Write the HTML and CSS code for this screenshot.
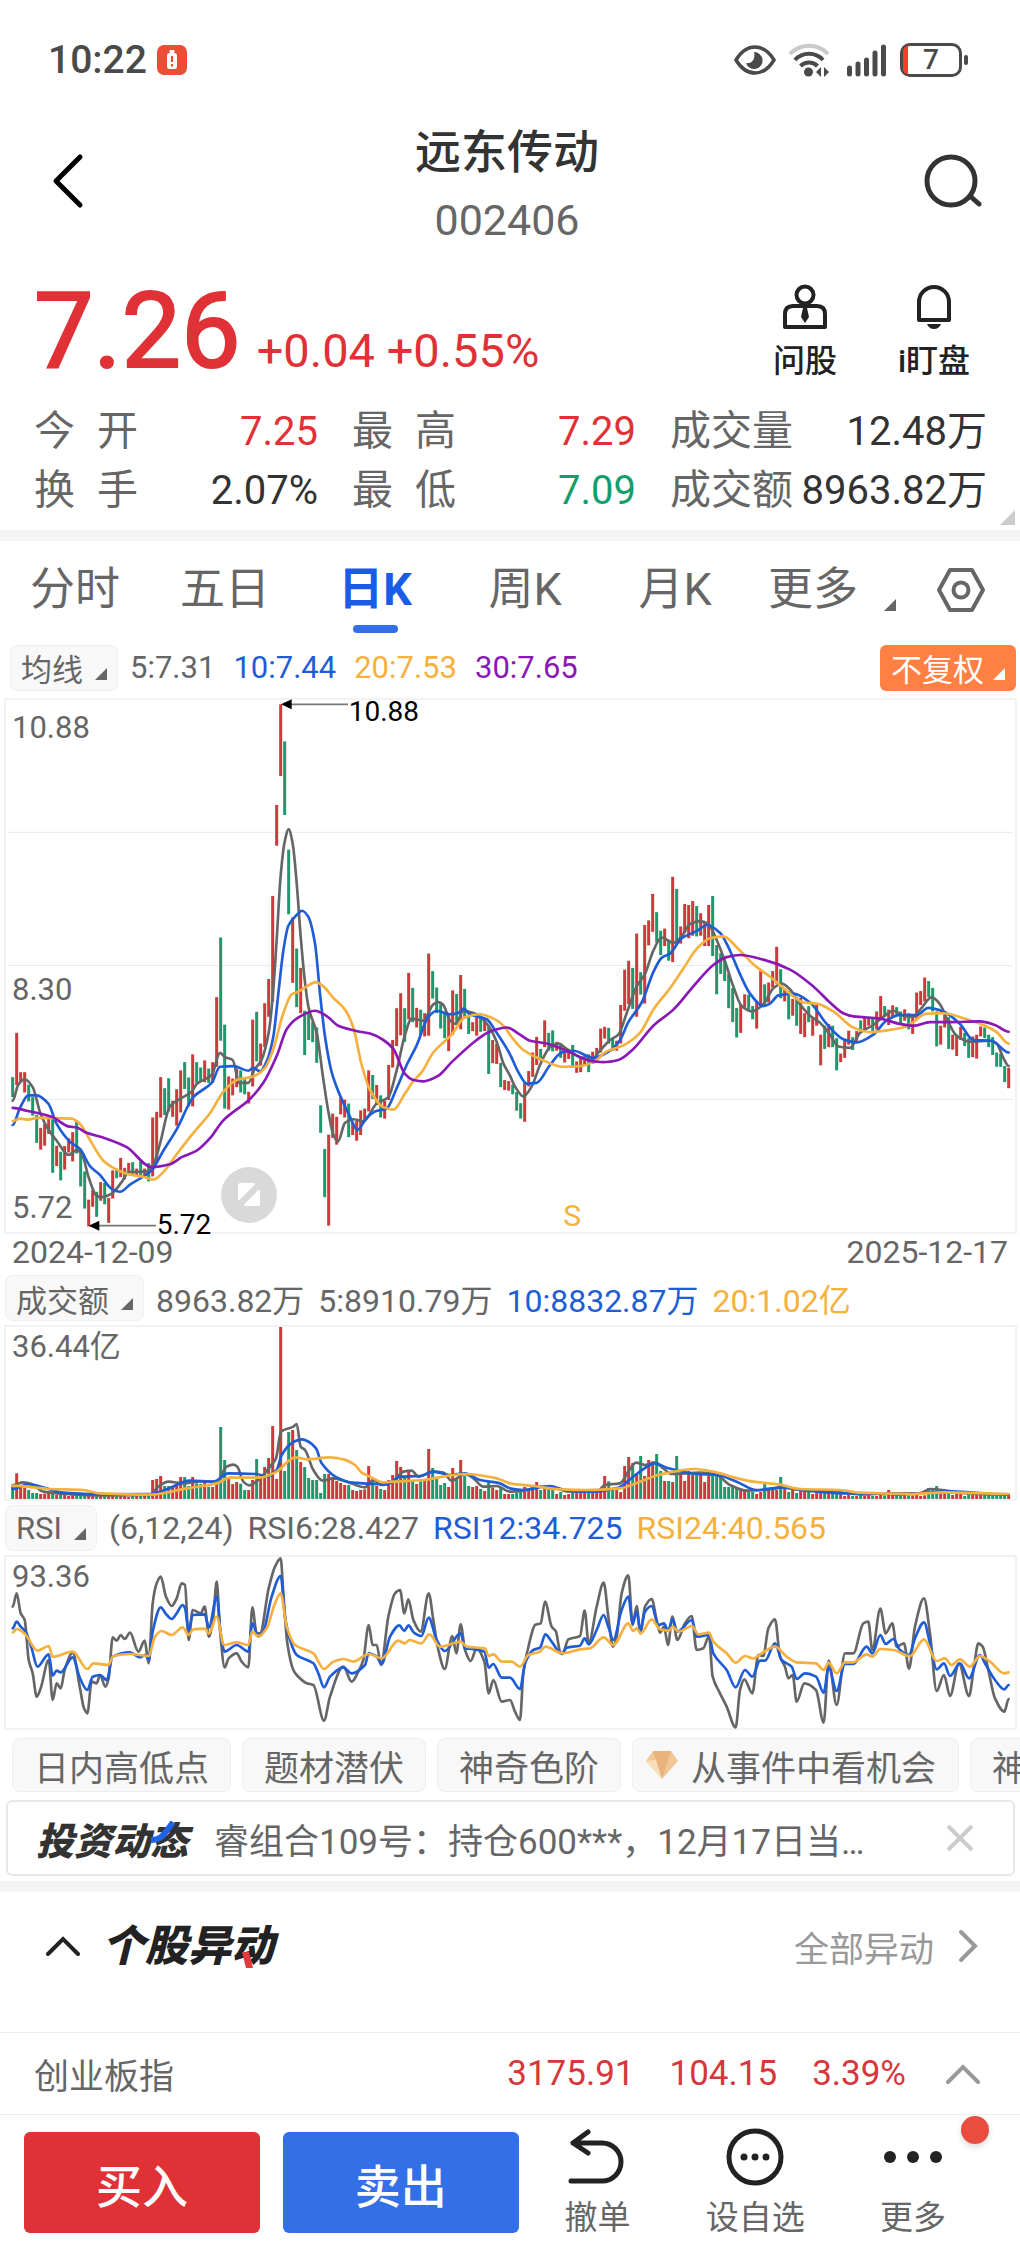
FILE: index.html
```html
<!DOCTYPE html>
<html lang="zh-CN">
<head>
<meta charset="utf-8">
<meta name="viewport" content="width=device-width, initial-scale=1">
<title>远东传动 002406</title>
<link rel="stylesheet" href="styles.css">
</head>
<body>
<div class="status">
  <span class="clock">10:22</span>
  <svg class="alert" viewBox="0 0 30 30" aria-hidden="true"><rect width="30" height="30" rx="7" fill="#eb4d36"/><rect x="10" y="8" width="10" height="16" rx="2.5" fill="#fff"/><rect x="12.500" y="5" width="5" height="3" rx="1" fill="#fff"/><path d="M15 11v6M15 19v2.500" stroke="#eb4d36" stroke-width="2.200"/></svg>
  <span class="fill"></span>
  <svg class="eye" viewBox="0 0 42 30" aria-hidden="true"><path d="M2 15C8 5 14 2 21 2s13 3 19 13c-6 10-12 13-19 13S8 25 2 15z" fill="none" stroke="#4a4a4a" stroke-width="3.500"/><path d="M20 7a8.500 8.500 0 1 1-8 11c5 1 10-3 8-11z" fill="#4a4a4a"/></svg>
  <svg class="wifi" viewBox="0 0 42 34" aria-hidden="true"><g fill="none" stroke="#4a4a4a" stroke-width="4"><path d="M2 11a26 26 0 0 1 38 0" stroke="#c9c9c9"/><path d="M7 17a19 19 0 0 1 28 0"/><path d="M12.500 23a12 12 0 0 1 17 0"/></g><circle cx="20.500" cy="29" r="4.500" fill="#4a4a4a"/><path d="M33 24v10l-5-5zM36 24v10l5-5z" fill="#4a4a4a"/></svg>
  <svg class="signal" viewBox="0 0 42 34" aria-hidden="true"><path d="M3.500 25v6M12 21v10M20.500 17v14M29 10v21M37.500 4v27" stroke="#4a4a4a" stroke-width="5" stroke-linecap="round"/></svg>
  <span class="battery"><i class="level"></i>7</span>
</div>

<header class="top">
  <button class="icon-btn" aria-label="返回"><svg width="34" height="56" viewBox="0 0 34 56"><path d="M30 4L6 28l24 24" fill="none" stroke="#000" stroke-width="5" stroke-linecap="round" stroke-linejoin="round"/></svg></button>
  <div class="title"><h1>远东传动</h1><p>002406</p></div>
  <button class="icon-btn right" aria-label="搜索"><svg width="60" height="56" viewBox="0 0 60 56"><circle cx="29" cy="28" r="24" fill="none" stroke="#333" stroke-width="5"/><path d="M48 43l9 8" stroke="#333" stroke-width="5" stroke-linecap="round"/></svg></button>
</header>

<section class="quote">
  <div class="price-row">
    <strong class="price">7.26</strong><span class="change">+0.04 +0.55%</span>
    <button class="action"><svg width="46" height="46" viewBox="0 0 46 46"><g fill="none" stroke="#222" stroke-width="4"><circle cx="23" cy="11" r="8.500"/><path d="M3 43V30q0-8 8-8h24q8 0 8 8v13z" stroke-linejoin="round"/></g><path d="M21 24h4l2 9-4 6-4-6z" fill="#222"/></svg>问股</button>
    <button class="action"><svg width="46" height="46" viewBox="0 0 46 46"><path d="M8 36V18a15 15 0 0 1 30 0v18z" fill="none" stroke="#222" stroke-width="4" stroke-linejoin="round"/><path d="M16 40h14q-2 5-7 5t-7-5z" fill="#222"/></svg>i盯盘</button>
  </div>
  <dl class="stats">
    <div><dt><span>今</span><span>开</span></dt><dd class="up">7.25</dd></div>
    <div><dt><span>最</span><span>高</span></dt><dd class="up">7.29</dd></div>
    <div><dt>成交量</dt><dd>12.48万</dd></div>
    <div><dt><span>换</span><span>手</span></dt><dd>2.07%</dd></div>
    <div><dt><span>最</span><span>低</span></dt><dd class="down">7.09</dd></div>
    <div><dt>成交额</dt><dd>8963.82万</dd></div>
  </dl>
  <i class="corner"></i>
</section>

<nav class="tabs">
  <button>分时</button><button>五日</button><button class="on">日K</button><button>周K</button><button>月K</button>
  <button class="more">更多<i class="tri"></i></button>
  <button class="gear" aria-label="设置"><svg width="50" height="46" viewBox="0 0 50 46"><g fill="none" stroke="#666" stroke-width="4" stroke-linejoin="round"><path d="M14 3h22l11 20-11 20H14L3 23z"/><circle cx="25" cy="23" r="7.500"/></g></svg></button>
</nav>

<div class="legend">
  <button class="pick">均线<i class="tri"></i></button>
  <span>5:7.31</span><span class="blue">10:7.44</span><span class="gold">20:7.53</span><span class="purple">30:7.65</span>
  <button class="adjust">不复权<i class="tri"></i></button>
</div>
<figure class="chart">
  <svg id="kline" viewBox="18 30 3027 1596" role="img" aria-label="日K线">
    <path class="grid" d="M24 427H3039M24 827H3039M24 1228H3039"/>
    <g id="candles"></g>
    <g id="averages"></g>
    <path class="lead" d="M870 43H1044M290 1607H468"/>
    <path d="M843 43l32-15v30zM266 1607l32-15v30z"/>
    <text class="mark" x="1046" y="93">10.88</text>
    <text class="mark" x="470" y="1632">5.72</text>
    <text class="sell" x="1690" y="1608">S</text>
  </svg>
  <span class="axis a-top">10.88</span><span class="axis a-mid">8.30</span><span class="axis a-low">5.72</span>
  <button class="expand" aria-label="全屏"><svg width="56" height="56" viewBox="0 0 56 56"><path d="M19 17h14L18 32V18zM38 24v14H24z" fill="#fff" stroke="#fff" stroke-width="2" stroke-linejoin="round"/></svg></button>
</figure>
<div class="dates"><time>2024-12-09</time><time>2025-12-17</time></div>

<div class="legend left">
  <button class="pick">成交额<i class="tri"></i></button>
  <span>8963.82万</span><span>5:8910.79万</span><span class="blue">10:8832.87万</span><span class="gold">20:1.02亿</span>
</div>
<figure class="chart">
  <svg id="volume" viewBox="18 21 3027 516" role="img" aria-label="成交额"></svg>
  <span class="axis">36.44亿</span>
</figure>

<div class="legend left">
  <button class="pick">RSI<i class="tri"></i></button>
  <span>(6,12,24)</span><span>RSI6:28.427</span><span class="blue">RSI12:34.725</span><span class="gold">RSI24:40.565</span>
</div>
<figure class="chart">
  <svg id="rsi" viewBox="18 171 3027 514" role="img" aria-label="RSI"></svg>
  <span class="axis">93.36</span>
</figure>

<div class="chips">
  <button>日内高低点</button><button>题材潜伏</button><button>神奇色阶</button>
  <button class="gem"><svg width="32" height="30" viewBox="0 0 32 30"><path d="M7 1h18l7 10-16 18L0 11z" fill="#f3c795"/><path d="M7 1l3 9h12l3-9zM10 10l6 19 6-19z" fill="#e9b47b"/><path d="M0 11l10-1 6 19z" fill="#f9dcb9"/></svg>从事件中看机会</button>
  <button>神奇九转</button>
</div>
<div class="news">
  <b class="brand">投资动态<svg class="swoosh" viewBox="0 0 28 22" aria-hidden="true"><path d="M1 19c10 0 13-5 22-18" fill="none" stroke="#1f63e8" stroke-width="6"/></svg></b>
  <a href="#news">睿组合109号：持仓600***，12月17日当天买入远东传动</a>
  <button aria-label="关闭"><svg width="30" height="30" viewBox="0 0 30 30"><path d="M3 3l24 24M27 3L3 27" stroke="#ccc" stroke-width="4"/></svg></button>
</div>

<section class="moves">
  <button class="fold" aria-label="收起"><svg width="34" height="20" viewBox="0 0 34 20"><path d="M2 18L17 3l15 15" fill="none" stroke="#222" stroke-width="4" stroke-linecap="round"/></svg></button>
  <h2>个股异动<svg class="tick" viewBox="0 0 14 16" aria-hidden="true"><path d="M2 0h7l4 16H6z" fill="#e03a3e"/></svg></h2>
  <a href="#all">全部异动<svg width="20" height="34" viewBox="0 0 20 34"><path d="M3 3l14 14L3 31" fill="none" stroke="#999" stroke-width="4" stroke-linecap="round"/></svg></a>
</section>
<div class="index">
  <span class="name">创业板指</span><span>3175.91</span><span>104.15</span><span>3.39%</span>
  <button aria-label="展开"><svg width="34" height="20" viewBox="0 0 34 20"><path d="M2 18L17 3l15 15" fill="none" stroke="#999" stroke-width="4" stroke-linecap="round"/></svg></button>
</div>
<footer class="trade">
  <button class="buy">买入</button><button class="sellbtn">卖出</button>
  <button class="tool"><svg width="58" height="58" viewBox="0 0 58 58"><path d="M3 53h31a18.500 18.500 0 0 0 0-38H5M20 4L5 15l15 10" fill="none" stroke="#222" stroke-width="5" stroke-linecap="round" stroke-linejoin="round"/></svg>撤单</button>
  <button class="tool"><svg width="58" height="58" viewBox="0 0 58 58"><circle cx="29" cy="29" r="26" fill="none" stroke="#222" stroke-width="5"/><g fill="#222"><circle cx="18" cy="29" r="3.500"/><circle cx="29" cy="29" r="3.500"/><circle cx="40" cy="29" r="3.500"/></g></svg>设自选</button>
  <button class="tool"><svg width="58" height="58" viewBox="0 0 58 58"><g fill="#222"><circle cx="6" cy="29" r="6"/><circle cx="29" cy="29" r="6"/><circle cx="52" cy="29" r="6"/></g></svg>更多<i class="dot"></i></button>
</footer>
<script src="chart.js"></script>
</body>
</html>
```
FILE: styles.css
```css
* { box-sizing: border-box; }
body { margin: 0; background: #fff; color: #333; font-family: Roboto, "Noto Sans CJK SC", sans-serif; font-size: 35px; overflow-x: hidden; }
button { border: 0; padding: 0; margin: 0; background: none; color: inherit; font: inherit; }
a { color: inherit; text-decoration: none; }
h1, h2, p, dl, dd, figure { margin: 0; }
svg { display: block; flex: none; }
.up { color: #e03236; }
.down { color: #159e6c; }
.blue { color: #1f5dd6; }
.gold { color: #f6b03e; }
.purple { color: #8a18b6; }

.status { display: flex; align-items: center; height: 120px; padding: 0 58px 0 48px; color: #4a4a4a; }
.clock { font-size: 39px; font-weight: 500; margin-right: 10px; }
.alert { width: 30px; height: 30px; }
.fill { flex: 1; }
.eye { width: 42px; height: 30px; margin-right: 12px; }
.wifi { width: 42px; height: 34px; margin-right: 16px; }
.signal { width: 42px; height: 34px; margin-right: 12px; }
.battery { position: relative; width: 62px; height: 34px; border: 3px solid #4a4a4a; border-radius: 10px; font-size: 28px; font-weight: 500; line-height: 28px; text-align: center; }
.battery::after { content: ""; position: absolute; right: -9px; top: 9px; width: 4px; height: 10px; border-radius: 2px; background: #4a4a4a; }
.level { position: absolute; left: 0; top: 0; width: 5px; height: 28px; border-radius: 6px 0 0 6px; background: #fb3a2c; }

.top { display: flex; align-items: center; height: 140px; padding: 0 38px 8px 50px; }
.icon-btn { width: 52px; margin-bottom: 10px; }
.icon-btn.right { width: 70px; }
.icon-btn.right svg { margin-left: auto; }
.title { flex: 1; text-align: center; }
.title h1 { font-size: 46px; line-height: 68px; font-weight: 500; color: #333; }
.title p { font-size: 43px; line-height: 68px; color: #666; }

.quote { position: relative; height: 281px; padding: 5px 33px 0 34px; border-bottom: 11px solid #f4f4f4; }
.price-row { display: flex; align-items: baseline; height: 137px; color: #e03236; }
.price { font-size: 106px; line-height: 132px; font-weight: 400; margin-right: 16px; -webkit-text-stroke: 2px currentColor; }
.change { font-size: 47px; flex: 1; }
.action { display: flex; flex-direction: column; align-items: center; width: 96px; margin-right: 33px; color: #222; font-size: 32px; line-height: 46px; gap: 8px; font-weight: 500; align-self: center; }
.action:last-child { margin-right: 5px; }
.stats { display: grid; grid-template-columns: 284fr 284fr 317fr; column-gap: 34px; line-height: 59px; }
.stats div { display: flex; justify-content: space-between; }
.stats dt { display: flex; justify-content: space-between; min-width: 104px; font-size: 41px; color: #666; }
.stats dd { font-size: 40px; white-space: nowrap; }
.corner { position: absolute; right: 5px; bottom: 5px; border-left: 15px solid transparent; border-bottom: 15px solid #ccc; }

.tri { display: inline-block; width: 0; height: 0; border-left: 12px solid transparent; border-bottom: 12px solid currentColor; }
.tabs { display: flex; align-items: center; height: 98px; padding: 0 34px 0 0; font-size: 45px; line-height: 98px; color: #666; }
.tabs button { flex: 149; }
.tabs .on { position: relative; color: #1a5ce8; font-weight: 700; }
.tabs .on::after { content: ""; position: absolute; left: 50%; bottom: 6px; width: 45px; height: 8px; margin-left: -22px; border-radius: 4px; background: #336fe6; }
.tabs .more { flex: none; display: flex; align-items: center; gap: 26px; margin-left: 18px; }
.tabs .more .tri { margin-top: 30px; }
.tabs .gear { flex: none; margin-left: 40px; }

.legend { display: flex; align-items: center; gap: 18px; height: 59px; padding: 0 4px 2px 10px; font-size: 31px; color: #666; white-space: nowrap; }
.legend.left { padding: 0 5px; gap: 14px; height: 54px; }
.left span { font-size: 32px; }
.pick { display: flex; align-items: center; gap: 12px; height: 46px; padding: 0 10px; border: 1px solid #eee; border-radius: 8px; background: #f8f8f8; }
.pick .tri, .adjust .tri { margin-top: 12px; }
.legend .pick { margin-right: -6px; }
.left .pick { margin-right: -2px; }
.adjust { display: flex; align-items: center; gap: 9px; height: 46px; margin-left: auto; padding: 0 11px; border-radius: 6px; background: #ff8042; color: #fff; }

.chart { position: relative; margin: 0 3px 0 4px; border: 2px solid #f2f2f2; }
.chart svg { width: 100%; height: auto; overflow: visible; }
.chart .expand { position: absolute; left: 21%; bottom: 9px; width: 56px; height: 56px; margin-left: 3px; border-radius: 50%; background: #d9d9d9; }
.axis { position: absolute; left: 6px; top: 0; font-size: 31px; line-height: 40px; color: #666; }
.axis.a-top { top: 8px; }
.axis.a-mid { top: 50%; margin-top: 4px; }
.axis.a-low { top: auto; bottom: 4px; }
.grid { stroke: #e8e8e8; stroke-width: 3; }
.lead { stroke: #777; stroke-width: 5; }
.mark { font-size: 84px; fill: #000; }
.sell { font-size: 90px; fill: #f6b03e; }
.line { fill: none; stroke-width: 8; stroke-linejoin: round; stroke-linecap: round; }
.dates { display: flex; justify-content: space-between; height: 37px; padding: 0 12px; font-size: 32px; line-height: 37px; color: #666; }

.chips { display: flex; gap: 11px; margin-top: 8px; padding-left: 12px; overflow: hidden; color: #666; white-space: nowrap; }
.chips button { flex: none; display: flex; align-items: center; gap: 13px; height: 54px; padding: 0 21px; border: 1px solid #eee; border-radius: 8px; background: #f8f8f8; }
.chips .gem { padding: 0 22px 0 13px; }
.news { display: flex; align-items: center; height: 76px; margin: 8px 5px 5px 6px; padding: 0 38px 0 28px; border: 2px solid #e8e8e8; border-radius: 6px; color: #666; }
.brand { position: relative; margin-right: 26px; font-size: 38px; font-weight: 900; font-style: italic; color: #333; }
.swoosh { position: absolute; right: 10px; top: 10px; width: 28px; height: 22px; }
.news a { width: 670px; overflow: hidden; white-space: nowrap; text-overflow: ellipsis; }
.news button { margin-left: auto; }

.moves { display: flex; align-items: center; height: 151px; padding: 0 42px 32px 46px; border-top: 11px solid #f4f4f4; }
.moves h2 { position: relative; margin-left: 22px; font-size: 43px; line-height: 56px; font-weight: 900; font-style: italic; color: #222; }
.tick { position: absolute; right: 20px; bottom: 6px; width: 14px; height: 16px; }
.moves a { display: flex; align-items: center; gap: 24px; margin-left: auto; color: #999; }
.index { display: flex; align-items: center; gap: 35px; height: 83px; padding: 0 40px 0 34px; border: solid #eee; border-width: 1px 0; color: #d8363a; }
.index .name { flex: 1; color: #666; }
.index button { margin-left: 5px; }
.trade { display: flex; align-items: flex-start; height: 135px; padding: 17px 28px 0 24px; }
.buy, .sellbtn { flex: 236; height: 101px; margin-right: 23px; border-radius: 6px; background: #e03236; color: #fff; font-size: 46px; font-weight: 500; }
.sellbtn { background: #336fe6; margin-right: 0; }
.tool { position: relative; flex: 158; display: flex; flex-direction: column; align-items: center; gap: 9px; margin-top: -4px; color: #666; font-size: 33px; line-height: 46px; }
.dot { position: absolute; right: 3px; top: -12px; width: 28px; height: 28px; border-radius: 50%; background: #e84e40; box-shadow: 0 3px 6px #ddd; }
```
FILE: chart.js
```js
// One entry per trading day: direction (r up, g down), top and bottom of the bar.
const days = `g1084-1140 r960-1106 r1070-1098 r1070-1127 g1105-1152 g1140-1192 g1190-1268 r1226-1287 r1215-1276 r1200-1243
g1200-1352 r1276-1333 g1293-1373 r1277-1343 r1255-1295 r1238-1320 g1205-1298 g1290-1390 g1348-1452 r1427-1502
r1400-1447 g1405-1475 r1378-1430 g1380-1440 r1422-1492 r1345-1424 g1343-1367 r1310-1364 r1338-1370 r1324-1352
g1322-1360 r1340-1362 g1320-1362 r1340-1365 g1325-1376 r1197-1362 r1181-1320 r1084-1197 g1115-1190 g1087-1180
r1150-1195 r1118-1220 r1065-1183 g1042-1117 g1085-1166 r1020-1166 g1042-1100 g1057-1098 r1037-1098 g1060-1100
r1042-1100 r860-1055 g693-982 g937-1172 r1082-1175 r1088-1135 r1060-1112 g1065-1127 g1085-1132 r1125-1158
r923-1110 g901-1040 r990-1052 r877-1000 r809-915 r577-872 r322-436 r40-241 g144-350 g447-628
r637-820 g724-888 r778-905 g898-1022 g905-980 g930-986 g945-1044 g1163-1240 g1285-1420 r1245-1500
r1186-1254 r1195-1273 r1140-1188 r1147-1197 g1158-1252 r1210-1246 r1207-1262 r1177-1246 r1172-1205 r1065-1180
g1078-1145 r1106-1162 g1135-1197 r1150-1200 r1050-1148 r980-1057 r891-997 r849-967 g891-985 r792-922
g834-930 r890-945 g895-965 r905-970 r738-968 g787-864 g833-905 g880-948 g905-975 r905-1011
r841-965 g851-935 r798-950 g837-920 g915-963 r930-955 r905-968 g918-957 r925-955 g940-1075
r980-1045 r990-1047 g1044-1112 r1092-1120 r1095-1122 g1105-1132 g1125-1178 g1157-1200 r1097-1209 r1067-1110
r1015-1083 r971-1050 g1005-1038 r925-1000 g960-1010 g953-1012 r985-1010 g990-1030 r1010-1043 r1005-1033
g994-1055 r1040-1072 r1025-1070 r1025-1050 g1020-1070 r1013-1047 r1002-1042 r948-1015 r943-976 g946-990
g975-1010 r982-1010 r882-990 r783-898 r758-880 g778-893 r682-915 g790-853 r658-878 r645-715
r571-677 g622-707 g674-742 r668-717 g700-758 r523-762 g557-710 r662-710 r599-680 r602-695
r591-688 g605-690 r625-688 r650-717 r602-717 g577-745 g714-852 g737-795 g755-815 g794-891
g835-930 g890-973 r880-960 r852-890 g853-898 g885-922 r873-948 r786-885 g824-880 r819-875
r787-833 r719-822 g782-863 r837-872 g843-922 r865-912 g860-940 r862-963 r905-972 g885-930
r920-968 r882-940 r965-1051 g940-1005 r935-1000 g940-1000 g975-1065 r1018-1042 r980-1030 r954-993
g972-1008 r955-985 g925-955 r917-955 r915-940 g920-960 r900-950 r857-920 g885-915 r895-938
r883-915 g888-912 g900-937 r894-926 g905-950 r910-963 r847-920 r843-882 r805-872 g815-860
g834-900 g900-998 r940-993 r910-945 g916-1005 r965-1007 r965-1025 r943-980 g960-997 g975-1030
r970-1028 r965-1032 r942-970 g945-975 g965-1000 g972-1022 g1015-1055 g1018-1055 g1053-1098 r1058-1115`.split(/\s+/);

const turnover = [500,460,502,503,510,519,519,522,521,519,519,524,522,524,528,522,519,518,522,528,528,522,528,524,526,528,524,528,528,530,528,528,526,528,528,
480,477,468,498,498,500,492,471,471,498,471,490,492,482,501,501,483,321,420,472,492,486,491,510,510,480,417,470,441,414,318,477,21,453,336,330,390,426,441,474,480,480,519,462,462,471,483,489,495,495,510,513,510,508,438,478,498,507,510,480,465,423,441,471,455,483,492,484,480,387,444,477,495,489,501,444,474,420,468,498,501,498,507,513,483,503,510,500,522,522,
522,517,516,501,510,507,486,510,505,508,507,522,516,525,522,515,515,518,516,514,518,514,512,468,484,503,503,516,438,411,429,459,408,468,420,424,402,453,483,483,486,408,462,483,453,465,465,465,486,468,468,468,466,501,501,495,507,510,510,516,516,522,516,492,510,510,510,471,504,516,510,519,508,513,516,522,516,514,518,514,514,518,516,528,524,528,528,524,528,524,528,528,524,526,510,521,524,520,520,526,526,524,528,526,504,507,498,518,518,518,525,520,518,528,525,524,522,525,525,524,526,524,524,525,524,525,524,526,524,525];

const averages = {
  '#666': '38,1150 55,1105 74,1090 98,1112 122,1188 146,1232 170,1262 206,1302 230,1288 246,1300 266,1365 290,1416 305,1420 335,1410 365,1378 386,1350 440,1348 458,1335 480,1270 510,1165 540,1145 575,1125 590,1103 635,1078 660,1016 675,1028 698,1036 718,1100 745,1100 762,1065 785,1035 806,960 818,860 830,700 842,520 854,425 866,390 878,430 890,540 902,690 914,810 926,890 950,960 970,1090 985,1180 1000,1245 1014,1264 1035,1212 1060,1202 1090,1208 1130,1158 1165,1140 1190,1065 1215,965 1235,920 1270,926 1300,880 1315,874 1330,882 1350,925 1368,935 1390,898 1430,908 1465,940 1490,985 1510,1045 1530,1080 1545,1110 1570,1138 1595,1110 1620,1050 1650,1000 1675,990 1700,1005 1740,1028 1775,1035 1800,1010 1830,980 1855,965 1880,905 1910,830 1935,795 1960,730 1985,693 2020,708 2045,690 2070,655 2100,647 2125,655 2150,700 2175,760 2200,830 2225,885 2255,900 2290,880 2320,835 2345,822 2370,838 2400,880 2430,912 2460,932 2490,965 2515,998 2550,1002 2580,960 2620,938 2650,915 2680,898 2710,912 2740,915 2765,890 2795,860 2820,880 2845,930 2870,968 2910,985 2970,982 2990,990 3010,1030 3026,1053',
  '#1f5dd6': '38,1218 60,1170 85,1135 110,1135 145,1158 170,1215 210,1265 240,1285 270,1333 300,1358 335,1397 360,1405 390,1385 455,1345 490,1290 530,1230 580,1140 635,1100 660,1055 700,1053 745,1066 760,1058 780,1068 800,1040 820,970 835,850 850,730 865,660 890,630 906,618 925,635 945,710 960,850 975,970 995,1070 1020,1135 1050,1195 1072,1232 1100,1198 1125,1180 1160,1172 1190,1115 1220,1050 1250,995 1285,915 1310,898 1350,908 1380,902 1390,892 1410,908 1460,922 1490,960 1530,1020 1555,1070 1580,1102 1610,1100 1650,1050 1685,1015 1720,1010 1780,1030 1830,1010 1860,980 1885,930 1925,875 1960,790 1985,750 2010,738 2045,695 2090,675 2122,658 2160,680 2185,720 2215,785 2250,850 2290,885 2310,878 2335,855 2380,850 2430,875 2480,935 2530,978 2570,987 2620,965 2660,925 2700,910 2750,910 2785,890 2830,900 2880,935 2920,980 2975,982 3026,1015',
  '#f6b03e': '38,1207 60,1200 85,1203 110,1198 215,1200 240,1215 270,1260 310,1318 340,1338 390,1357 430,1363 460,1371 490,1350 530,1300 580,1240 630,1185 670,1125 710,1092 760,1082 795,1058 820,1005 850,905 875,852 895,845 920,830 947,818 970,830 1000,862 1035,895 1060,945 1085,1050 1110,1120 1150,1168 1180,1175 1215,1130 1240,1095 1265,1070 1300,1015 1355,965 1395,916 1440,908 1490,925 1515,945 1535,972 1570,1008 1620,1033 1690,1055 1740,1053 1780,1042 1820,1012 1870,995 1920,960 1960,895 2010,835 2050,780 2090,725 2130,695 2170,690 2210,720 2260,768 2310,803 2370,850 2410,875 2450,878 2500,900 2560,945 2610,958 2660,953 2720,942 2780,906 2830,905 2900,922 2960,942 2990,958 3026,990',
  '#8a18b6': '38,1170 80,1178 155,1195 205,1222 230,1225 260,1240 315,1255 380,1280 455,1336 510,1328 545,1308 590,1290 630,1255 670,1205 750,1145 790,1100 830,1025 860,950 890,920 945,898 980,913 1015,940 1080,957 1110,962 1150,980 1180,1005 1215,1075 1240,1092 1270,1096 1315,1080 1355,1042 1430,980 1470,956 1520,945 1560,965 1590,982 1640,990 1700,1010 1770,1038 1810,1042 1855,1036 1900,1005 1960,940 2020,895 2080,830 2140,770 2180,748 2220,742 2290,755 2370,783 2440,830 2490,875 2530,905 2560,914 2640,920 2700,935 2740,940 2790,930 2850,930 2940,928 2985,938 3026,957'
};
const turnoverAverages = {
  '#666': '38,495 70,487 95,492 130,515 200,522 300,526 450,525 475,500 505,485 550,490 600,484 650,485 680,440 700,434 712,440 730,485 748,496 780,475 810,440 828,415 843,335 880,320 890,312 902,380 915,390 940,450 968,482 1000,475 1040,485 1095,502 1120,480 1145,495 1180,485 1210,455 1235,452 1255,470 1300,455 1330,458 1355,482 1395,462 1420,475 1450,500 1490,498 1530,515 1570,512 1620,500 1660,502 1700,514 1790,515 1815,495 1860,490 1885,455 1908,428 1935,435 1965,428 1990,445 2015,462 2100,458 2150,465 2190,495 2240,512 2290,510 2350,503 2400,510 2500,515 2580,523 2680,520 2760,520 2790,507 2850,513 2900,520 3026,524',
  '#1f5dd6': '38,507 85,493 190,518 300,523 450,522 500,508 570,482 640,485 685,460 770,462 800,470 830,450 845,405 880,366 905,358 920,362 948,385 965,430 1010,472 1060,488 1160,493 1200,470 1260,468 1300,455 1350,465 1395,460 1440,480 1500,490 1530,505 1570,510 1650,498 1700,512 1780,515 1855,503 1910,462 1965,430 2000,443 2090,462 2150,465 2210,485 2270,510 2350,502 2420,512 2530,520 2640,520 2700,523 2790,517 2850,514 3026,524',
  '#f6b03e': '38,497 150,507 250,510 300,520 450,524 560,505 650,490 690,473 780,473 830,455 860,428 885,412 920,418 990,412 1030,418 1065,435 1085,458 1110,470 1150,487 1180,485 1270,480 1340,468 1400,462 1490,475 1530,490 1600,498 1680,508 1760,510 1860,505 1920,485 1975,465 2085,447 2150,457 2200,472 2260,485 2340,494 2400,507 2520,510 2580,518 2740,522 2830,517 3026,522'
};
const rsi = {
  '#666': '38,320 50,280 62,340 74,360 86,480 98,520 110,590 122,565 146,480 158,600 170,550 182,565 194,510 218,458 240,565 252,625 262,640 275,545 290,550 300,525 316,560 326,535 338,412 350,422 362,405 374,417 390,398 415,455 434,422 446,490 458,310 470,250 482,230 498,290 515,318 530,295 545,250 555,255 566,420 578,330 602,340 614,320 627,410 640,350 650,245 660,390 674,502 686,475 710,460 725,485 745,502 757,322 770,400 780,400 806,265 825,200 842,175 850,280 862,430 880,510 890,525 920,550 940,555 972,662 990,590 1030,500 1055,545 1075,515 1090,480 1106,375 1118,435 1130,435 1143,495 1165,350 1185,280 1200,270 1213,340 1225,298 1240,360 1262,395 1286,280 1300,360 1315,450 1334,507 1357,408 1369,460 1382,373 1395,450 1412,483 1430,445 1453,485 1466,580 1480,540 1505,605 1530,600 1545,635 1560,660 1570,520 1590,420 1605,375 1622,370 1635,305 1655,380 1668,395 1680,455 1687,462 1705,418 1740,408 1754,332 1766,430 1790,320 1811,248 1825,350 1839,440 1850,410 1865,280 1885,226 1898,375 1910,318 1921,400 1935,320 1955,297 1970,360 1980,398 1992,380 2004,435 2017,350 2032,420 2055,370 2075,348 2090,450 2110,445 2127,408 2138,530 2160,580 2180,620 2207,682 2220,570 2233,538 2257,580 2275,465 2290,468 2305,385 2325,358 2340,470 2355,500 2365,535 2378,525 2390,605 2413,550 2448,570 2471,668 2486,482 2510,615 2535,460 2560,460 2590,370 2605,365 2617,450 2641,326 2657,400 2677,370 2690,440 2712,430 2727,506 2745,380 2772,295 2790,400 2810,573 2832,525 2850,588 2877,490 2907,588 2922,500 2935,430 2948,440 2965,510 2985,595 3013,635 3026,597',
  '#1f5dd6': '38,385 50,365 62,380 77,395 95,445 112,500 146,463 158,527 170,512 182,517 218,472 240,535 262,570 278,530 300,525 320,540 338,470 390,457 420,472 436,465 446,480 458,395 482,322 498,342 515,357 530,340 548,315 555,325 566,392 578,345 614,343 627,382 650,290 662,400 674,455 710,435 745,455 757,370 775,410 790,395 815,290 842,228 855,350 870,420 890,465 940,490 955,520 972,562 990,530 1030,502 1055,520 1095,495 1106,460 1130,470 1145,492 1170,410 1198,376 1213,393 1225,376 1242,398 1264,408 1286,353 1310,420 1334,453 1382,400 1395,445 1415,447 1453,455 1466,503 1480,492 1505,533 1530,533 1560,567 1575,490 1600,450 1620,443 1636,403 1655,425 1685,462 1700,443 1740,437 1754,415 1766,433 1790,390 1811,345 1825,380 1840,420 1865,330 1885,290 1898,370 1910,335 1921,390 1935,335 1955,318 1975,375 1992,370 2004,392 2018,358 2032,395 2076,360 2090,410 2127,405 2140,460 2180,510 2207,562 2235,510 2257,530 2280,482 2295,482 2325,430 2345,480 2375,500 2390,537 2415,520 2448,530 2471,578 2486,502 2510,573 2535,492 2560,492 2600,440 2617,460 2641,405 2657,432 2680,417 2700,450 2727,465 2745,415 2772,367 2790,430 2810,508 2832,490 2850,528 2880,490 2907,535 2940,465 2955,490 2985,540 3013,568 3026,555',
  '#f6b03e': '38,397 50,387 75,402 112,452 146,438 158,470 218,455 262,507 280,490 325,495 340,468 390,462 446,468 465,410 485,393 515,405 548,382 566,405 580,388 614,386 627,400 650,350 672,435 710,427 745,435 757,395 775,410 800,385 825,310 842,280 860,380 885,435 940,460 972,507 1000,485 1030,477 1060,485 1106,462 1145,475 1195,422 1215,430 1228,420 1264,430 1288,403 1320,440 1382,425 1400,440 1455,445 1466,468 1480,463 1505,485 1535,485 1560,500 1585,465 1620,455 1636,440 1687,460 1740,448 1770,445 1811,412 1840,435 1885,370 1900,393 1910,385 1922,400 1955,358 1980,388 2006,392 2018,380 2035,395 2076,378 2095,403 2127,398 2140,425 2180,460 2207,488 2235,468 2260,475 2285,460 2325,440 2360,470 2390,487 2448,490 2471,510 2486,488 2510,520 2535,487 2560,487 2600,463 2617,470 2641,447 2680,450 2730,468 2772,418 2810,483 2835,475 2855,495 2880,478 2910,500 2940,468 2970,485 3013,520 3026,517'
};

const colours = { r: '#cd3a3e', g: '#22976a' };
// Price data is stored on a shorter vertical scale than the chart's.
const priceScale = 15 / 14;

function bar(i, colour, top, bottom) {
  return `<rect x="${33.5 + i * 12}" y="${top}" width="9" height="${bottom - top}" fill="${colour}"/>`;
}

// Smooth curve through the points that never overshoots its neighbours.
function curve(list, colour, scale) {
  const p = list.split(' ').map(s => s.split(',').map(Number)).map(([x, y]) => [x, y * scale]);
  const slope = p.map((q, i) => {
    if (!i || i === p.length - 1) return 0;
    const a = (q[1] - p[i - 1][1]) / (q[0] - p[i - 1][0]);
    const b = (p[i + 1][1] - q[1]) / (p[i + 1][0] - q[0]);
    return a * b <= 0 ? 0 : 2 * a * b / (a + b);
  });
  let d = `M${p[0]}`;
  for (let i = 1; i < p.length; i++) {
    const h = (p[i][0] - p[i - 1][0]) / 3;
    d += `C${p[i - 1][0] + h} ${p[i - 1][1] + h * slope[i - 1]} ${p[i][0] - h} ${p[i][1] - h * slope[i]} ${p[i]}`;
  }
  return `<path class="line" stroke="${colour}" d="${d}"/>`;
}
const curves = (set, scale = 1) => Object.entries(set).map(([c, l]) => curve(l, c, scale)).join('');

document.getElementById('candles').innerHTML = days.map((s, i) => {
  const [top, bottom] = s.slice(1).split('-').map(v => v * priceScale);
  return bar(i, colours[s[0]], top, bottom);
}).join('');
document.getElementById('averages').innerHTML = curves(averages, priceScale);
document.getElementById('volume').innerHTML =
  turnover.slice(0, days.length).map((top, i) => bar(i, colours[days[i][0]], top, 537)).join('') + curves(turnoverAverages);
document.getElementById('rsi').innerHTML = curves(rsi);
```
